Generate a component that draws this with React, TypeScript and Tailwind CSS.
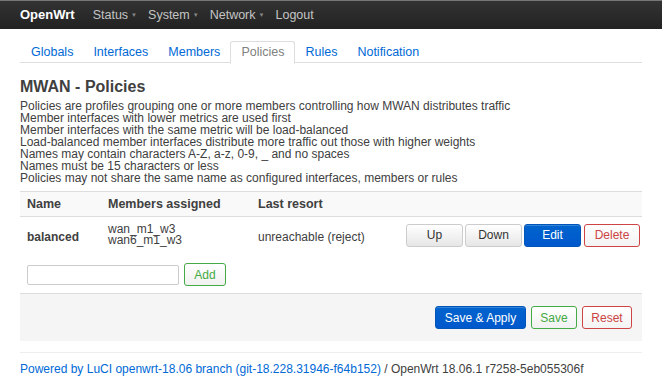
const MENU = ["Status", "System", "Network"];
const TABS = ["Globals", "Interfaces", "Members", "Policies", "Rules", "Notification"];
const HELP = [
  "Policies are profiles grouping one or more members controlling how MWAN distributes traffic",
  "Member interfaces with lower metrics are used first",
  "Member interfaces with the same metric will be load-balanced",
  "Load-balanced member interfaces distribute more traffic out those with higher weights",
  "Names may contain characters A-Z, a-z, 0-9, _ and no spaces",
  "Names must be 15 characters or less",
  "Policies may not share the same name as configured interfaces, members or rules",
];

const btn =
  "h-[23px] rounded-[3px] border text-[12px] leading-none px-2 bg-gradient-to-b shadow-[inset_0_1px_0_rgba(255,255,255,0.2)]";

export default function App() {
  return (
    <div className="w-[662px] h-[392px] bg-white text-[#404040] font-['Liberation_Sans',Arial,sans-serif] text-[12px] overflow-hidden">
      {/* Navbar */}
      <div className="h-[29px] border-t border-[#777] bg-gradient-to-b from-[#333] to-[#222] flex items-center pl-[20px]">
        <span className="text-white font-bold text-[13px] mr-[18px]">OpenWrt</span>
        <div className="flex items-center gap-[11px] text-[#c4c4c4] text-[12.5px]">
          {MENU.map((m) => (
            <span key={m} className="flex items-center">
              {m}
              <span className="ml-[3px] text-[6px] text-[#888]">▼</span>
            </span>
          ))}
          <span>Logout</span>
        </div>
      </div>

      <div className="px-[20px]">
        {/* Tabs */}
        <div className="mt-[12px] flex border-b border-[#ddd] h-[22px] pl-[1px]">
          {TABS.map((t) =>
            t === "Policies" ? (
              <div
                key={t}
                className="px-[10px] h-[23px] -mb-px border border-[#ddd] border-b-white rounded-t-[3px] bg-white text-[#808080] text-[12.5px] flex items-center"
              >
                {t}
              </div>
            ) : (
              <div key={t} className="px-[10px] h-[22px] text-[#0069d6] text-[12.5px] flex items-center">
                {t}
              </div>
            )
          )}
        </div>

        {/* Heading */}
        <h2 className="mt-[14px] text-[16px] font-bold leading-[20px] text-[#404040]">MWAN - Policies</h2>
        <div className="mt-[3px] text-[12px] leading-[12px] text-[#404040]">
          {HELP.map((l) => (
            <div key={l}>{l}</div>
          ))}
        </div>

        {/* Table */}
        <div className="mt-[7px] border-t border-[#ddd]">
          <div className="flex h-[25px] items-center bg-[#f9f9f9] border-b border-[#ddd] font-bold text-[12.5px]">
            <div className="w-[88px] pl-[7px]">Name</div>
            <div className="w-[150px]">Members assigned</div>
            <div>Last resort</div>
          </div>
          <div className="flex h-[39px] items-center text-[12px]">
            <div className="w-[88px] pl-[7px] font-bold">balanced</div>
            <div className="w-[150px] leading-[11px] -mt-[3px]">
              <div>wan_m1_w3</div>
              <div>wan6_m1_w3</div>
            </div>
            <div className="w-[148px]">unreachable (reject)</div>
            <div className="flex gap-[2px] -mt-[3px]">
              <button className={`${btn} w-[57px] border-[#ccc] from-white to-[#e6e6e6] text-[#333]`}>Up</button>
              <button className={`${btn} w-[57px] border-[#ccc] from-white to-[#e6e6e6] text-[#333]`}>Down</button>
              <button className={`${btn} w-[57px] border-[#0055b8] from-[#0064cd] to-[#0058cc] text-white`}>Edit</button>
              <button className={`${btn} w-[56px] ml-[1px] border-[#c44] from-white to-[#f4f4f4] text-[#c44]`}>Delete</button>
            </div>
          </div>
          <div className="flex items-center h-[38px] pl-[7px] border-b border-[#ddd]">
            <input className="w-[152px] h-[20px] border border-[#ccc] rounded-[2px] bg-white" />
            <button className={`${btn} ml-[5px] w-[42px] h-[22px] border-[#4a4] from-white to-[#f1f1f1] text-[#4a4]`}>Add</button>
          </div>
        </div>

        {/* Actions */}
        <div className="h-[47px] bg-[#f5f5f5] flex items-center justify-end gap-[5px] pr-[10px]">
          <button className={`${btn} w-[91px] border-[#0055b8] from-[#0064cd] to-[#0058cc] text-white`}>Save &amp; Apply</button>
          <button className={`${btn} w-[46px] border-[#4a4] from-white to-[#f1f1f1] text-[#4a4]`}>Save</button>
          <button className={`${btn} w-[50px] border-[#c44] from-white to-[#f4f4f4] text-[#c44]`}>Reset</button>
        </div>

        {/* Footer */}
        <div className="mt-[11px] border-t border-[#eee] pt-[7px] text-[12px]">
          <span className="text-[#0069d6]">Powered by LuCI openwrt-18.06 branch (git-18.228.31946-f64b152)</span>
          <span> / OpenWrt 18.06.1 r7258-5eb055306f</span>
        </div>
      </div>
    </div>
  );
}
